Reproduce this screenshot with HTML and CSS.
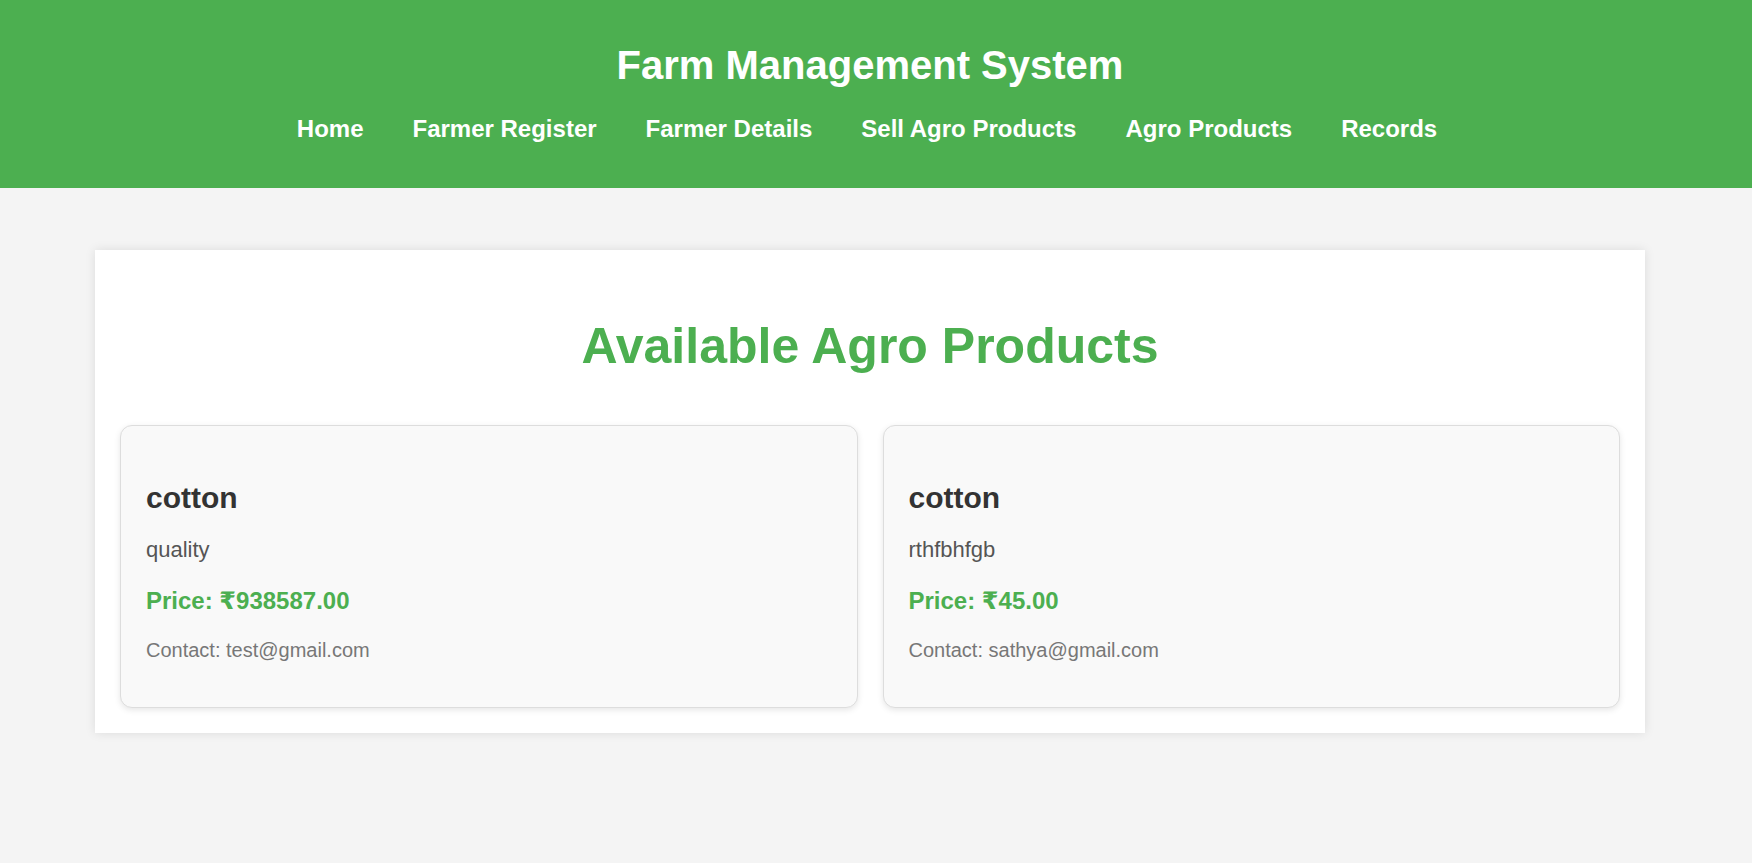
FILE: index.html
```html
<!DOCTYPE html>
<html lang="en">
<head>
<meta charset="utf-8">
<title>Agro Products - Farm Management System</title>
<link rel="stylesheet" href="styles.css">
</head>
<body>
<header class="site-header">
  <div class="header-inner">
    <h1 class="site-title">Farm Management System</h1>
    <nav class="main-nav">
      <a href="#">Home</a>
      <a href="#">Farmer Register</a>
      <a href="#">Farmer Details</a>
      <a href="#">Sell Agro Products</a>
      <a href="#">Agro Products</a>
      <a href="#">Records</a>
    </nav>
  </div>
</header>
<main class="page">
  <section class="panel">
    <h2 class="panel-title">Available Agro Products</h2>
    <div class="product-grid">
      <article class="product-card">
        <h3 class="product-name">cotton</h3>
        <p class="product-desc">quality</p>
        <p class="product-price">Price: ₹938587.00</p>
        <p class="product-contact">Contact: test@gmail.com</p>
      </article>
      <article class="product-card">
        <h3 class="product-name">cotton</h3>
        <p class="product-desc">rthfbhfgb</p>
        <p class="product-price">Price: ₹45.00</p>
        <p class="product-contact">Contact: sathya@gmail.com</p>
      </article>
    </div>
  </section>
</main>
</body>
</html>
```
FILE: styles.css
```css
* { box-sizing: border-box; }

html, body {
  margin: 0;
  padding: 0;
}

body {
  font-family: "Liberation Sans", Arial, "DejaVu Sans", sans-serif;
  background: #f4f4f4;
  color: #333;
  min-height: 863px;
}

.site-header {
  background: #4caf50;
  color: #fff;
}

.header-inner {
  padding: 42px 12px 45px 0;
  display: flex;
  flex-direction: column;
  align-items: center;
}

.site-title {
  margin: 0;
  font-size: 40px;
  font-weight: 700;
  line-height: 46px;
}

.main-nav {
  margin-top: 27px;
  padding-right: 6px;
  display: flex;
  justify-content: center;
  gap: 49px;
}

.main-nav a {
  color: #fff;
  text-decoration: none;
  font-size: 24px;
  font-weight: 700;
  line-height: 28px;
}

.page {
  padding: 62px 12px 0 0;
}

.panel {
  width: 1550px;
  margin: 0 auto;
  background: #fff;
  padding: 25px;
  box-shadow: 0 0 10px rgba(0, 0, 0, 0.1);
}

.panel-title {
  margin: 43px 0 50px;
  text-align: center;
  color: #4caf50;
  font-size: 50px;
  font-weight: 700;
  line-height: 57px;
}

.product-grid {
  display: grid;
  grid-template-columns: 1fr 1fr;
  gap: 25px;
}

.product-card {
  background: #f9f9f9;
  border: 1px solid #ddd;
  border-radius: 12px;
  padding: 25px;
  box-shadow: 0 2px 6px rgba(0, 0, 0, 0.1);
}

.product-name {
  margin: 30px 0 22px;
  font-size: 30px;
  font-weight: 700;
  line-height: 34px;
  color: #333;
}

.product-desc {
  margin: 0 0 25px;
  font-size: 22px;
  line-height: 25px;
  color: #555;
}

.product-price {
  margin: 0 0 24px;
  font-size: 24px;
  font-weight: 700;
  line-height: 28px;
  color: #4caf50;
}

.product-contact {
  margin: 0 0 20px;
  font-size: 20px;
  line-height: 23px;
  color: #777;
}
```
